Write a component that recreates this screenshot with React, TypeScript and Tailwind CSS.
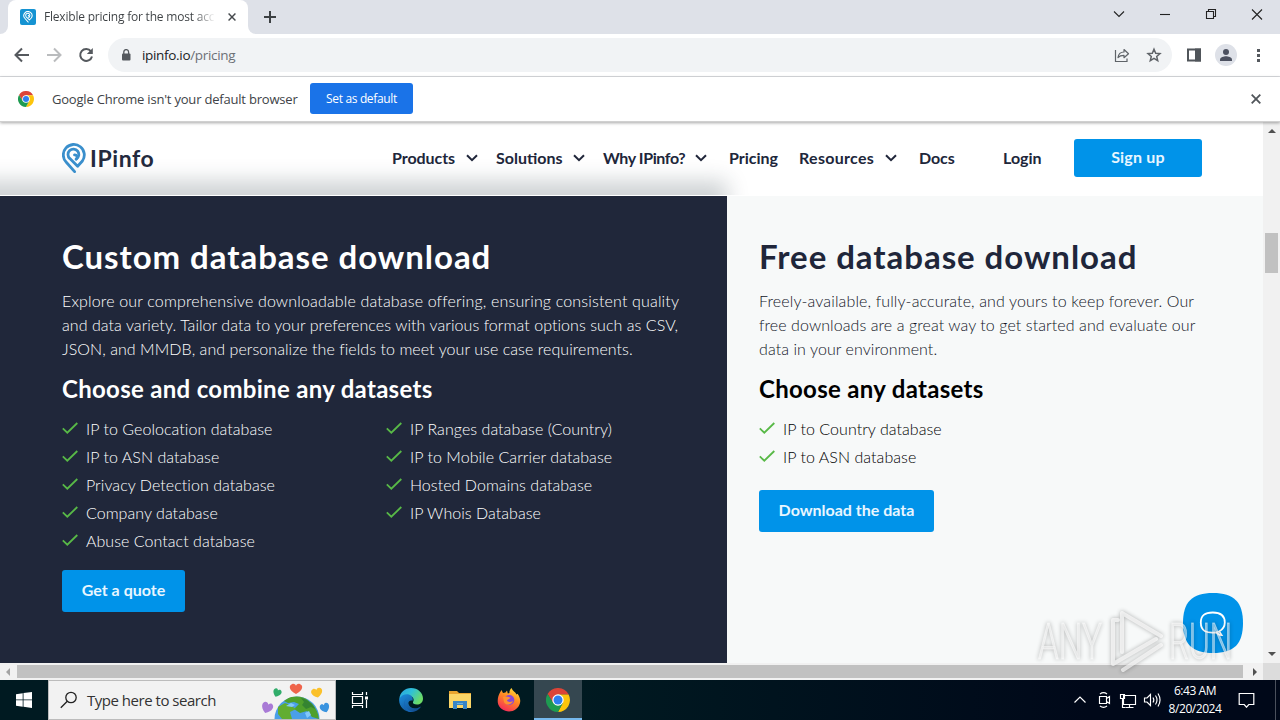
import React from "react";

const navItems = [
  { label: "Products", menu: true, cls: "w-[104px] pr-[18px] tracking-[-0.05px]" },
  { label: "Solutions", menu: true, cls: "w-[107px] pr-[18px] tracking-[0px]" },
  { label: "Why IPinfo?", menu: true, cls: "w-[126px] pr-[22px] tracking-[-0.4px]" },
  { label: "Pricing", menu: false, cls: "w-[70px] tracking-[0px]" },
  { label: "Resources", menu: true, cls: "w-[120px] pr-[22px] tracking-[0.3px]" },
  { label: "Docs", menu: false, cls: "w-[84px] tracking-[-0.1px]" },
];

const customLeft = [
  "IP to Geolocation database",
  "IP to ASN database",
  "Privacy Detection database",
  "Company database",
  "Abuse Contact database",
];
const customRight = [
  "IP Ranges database (Country)",
  "IP to Mobile Carrier database",
  "Hosted Domains database",
  "IP Whois Database",
];
const freeItems = ["IP to Country database", "IP to ASN database"];

function ChromeLogo({ className }: { className: string }) {
  return (
    <svg viewBox="0 0 24 24" className={className}>
      <path d="M12 6.4H22.6L22.4 6A12 12 0 0 0 1.6 6L7.1 15Z" fill="#dc4437" />
      <path d="M16.9 14.8 12 24A12 12 0 0 0 22.6 6.4H12Z" fill="#fdc50c" />
      <path d="M7.1 14.8 1.6 6A12 12 0 0 0 12 24L16.9 14.8Z" fill="#1e9b51" />
      <circle cx="12" cy="12" r="5.7" fill="#fff" />
      <circle cx="12" cy="12" r="4.5" fill="#2d7ff0" />
    </svg>
  );
}

function PinLogo({ className, color, width }: { className: string; color: string; width: number }) {
  return (
    <svg viewBox="0 0 24 31" className={className} fill="none" stroke={color} strokeWidth={width} strokeLinecap="round" strokeLinejoin="round">
      <path d="M12.600 28.600 4.300 19.300A10.500 10.500 0 1 1 20.400 18L15.600 23.200 7.900 15.600A5.400 5.400 0 1 1 14.200 16.100" />
      <path d="M14.200 16.100A2.400 2.400 0 0 0 12.500 11.800" />
    </svg>
  );
}

function Cross({ className }: { className: string }) {
  return (
    <svg viewBox="0 0 10 10" className={className} fill="none" stroke="currentColor" strokeWidth="1.8">
      <path d="m.7.7 8.600 8.600M9.300.7.7 9.300" />
    </svg>
  );
}

function CheckItem({ label }: { label: string }) {
  return (
    <li className="flex h-7 items-center">
      <svg viewBox="0 0 16 12" className="-mt-[3px] mr-2 h-3 w-4" fill="none" stroke="#58b947" strokeWidth="1.8">
        <path d="m.8 6.4 4.5 4.3L15.3 1" />
      </svg>
      <span className="whitespace-nowrap tracking-[0.05px]">{label}</span>
    </li>
  );
}

function TabStrip() {
  return (
    <div className="flex h-[34px] bg-[#dee1e8]">
      <div className="w-2 bg-white">
        <div className="h-full w-2 rounded-br-lg bg-[#dee1e8]" />
      </div>
      <div className="flex w-[240px] items-center rounded-t-lg bg-white pl-3">
        <div className="flex size-4 items-center justify-center rounded-[2px] bg-[#1593d2]">
          <PinLogo className="h-3 w-2.5" color="#fff" width={2.6} />
        </div>
        <div className="ml-2 w-[171px] overflow-hidden whitespace-nowrap bg-linear-to-r from-[#3c4043] from-88% to-transparent bg-clip-text text-[12px] tracking-[-0.2px] text-transparent">
          Flexible pricing for the most acc
        </div>
        <Cross className="ml-[13px] size-2 text-[#45494d]" />
      </div>
      <div className="w-2 bg-white">
        <div className="h-full w-2 rounded-bl-lg bg-[#dee1e8]" />
      </div>
      <svg viewBox="0 0 12 12" className="ml-2 mt-[11px] size-3" stroke="#3c4043" strokeWidth="2">
        <path d="M6 0v12M0 6h12" />
      </svg>
      <div className="ml-auto flex pr-4">
        <svg viewBox="0 0 160 34" className="h-[34px] w-40" fill="none" stroke="#222" strokeWidth="1.1">
          <path d="m10 11.500 5 5 5-5" />
          <path d="M56 14.500h10" />
          <path d="M102.500 11.500h7v7h-7zM104.500 11.500v-2h7v7h-2" />
          <path d="m148 9.500 10 10m0-10-10 10" />
        </svg>
      </div>
    </div>
  );
}

function Toolbar() {
  return (
    <div className="flex h-[43px] items-center border-b border-[#dadce0] bg-white">
      <svg viewBox="0 0 108 42" className="h-[42px] w-[108px] shrink-0" fill="none" strokeWidth="2">
        <path d="M29 21H16m6-6.500L15.500 21l6.500 6.500" stroke="#55595e" />
        <path d="M47 21h13m-6-6.500 6.500 6.500-6.500 6.500" stroke="#babcbe" />
        <path d="M91 17.300A6 6 0 1 0 92 22.500" stroke="#55595e" />
        <path d="M92.800 14v6h-6z" fill="#55595e" />
      </svg>
      <div className="flex h-[34px] w-[1064px] items-center rounded-full bg-[#f1f3f5] pl-[13px]">
        <svg viewBox="0 0 10 12" className="h-3 w-2.5">
          <rect x="1" y="4.500" width="8.500" height="7" rx="1" fill="#55595e" />
          <path d="M2.800 5V3a2.400 2.400 0 0 1 4.800 0v2" fill="none" stroke="#55595e" strokeWidth="1.300" />
        </svg>
        <span className="ml-[11px] text-[13.500px] tracking-[-0.32px] text-[#202124]">
          ipinfo.io<span className="text-[#6c7075]">/pricing</span>
        </span>
        <svg viewBox="0 0 56 20" className="ml-auto mr-[2px] h-5 w-14" fill="none" stroke="#5f6368">
          <path d="M1.500 5v11.500h11.500v-3" strokeWidth="1.200" />
          <path d="M4 12.500c.5-4 3-5.500 6-5.500V4.500l4.500 4.200-4.500 4V10.300c-2.500 0-4.500.5-6 2.200Z" strokeWidth="1.200" strokeLinejoin="round" />
          <path d="m40 4.200 1.700 4 4.300.4-3.300 2.900 1 4.200-3.700-2.300-3.700 2.300 1-4.200-3.300-2.900 4.300-.4Z" strokeWidth="1.500" />
        </svg>
      </div>
      <svg viewBox="0 0 108 42" className="h-[42px] w-[108px] shrink-0">
        <path d="M16 15.500h12v11H16z" fill="#fff" stroke="#50555a" strokeWidth="2" />
        <path d="M23 14.500h6v13h-6z" fill="#50555a" />
        <circle cx="54" cy="21" r="11" fill="#dee1e8" />
        <circle cx="54" cy="18" r="3" fill="#4c5160" />
        <path d="M48 27v-1.500c0-2 4-3.200 6-3.200s6 1.200 6 3.200V27z" fill="#4c5160" />
        <path d="M85 15h3v3h-3zM85 20h3v3h-3zM85 25h3v3h-3z" fill="#55595e" />
      </svg>
    </div>
  );
}

function InfoBar() {
  return (
    <div className="relative z-10 flex h-[45px] items-center border-b border-[#d0d0d0] bg-white pl-[18px] pr-[19px] shadow-[0_1px_3px_rgba(0,0,0,0.35)]">
      <ChromeLogo className="size-4" />
      <span className="ml-[18px] mt-px w-[258px] whitespace-nowrap text-[13px] tracking-[-0.2px] text-[#404347]">
        Google Chrome isn't your default browser
      </span>
      <button className="-mt-px h-[31px] w-[103px] rounded-[3px] bg-[#1a73e8] text-[12px] tracking-[-0.35px] text-white">Set as default</button>
      <Cross className="ml-auto size-[10px] text-[#50555a]" />
    </div>
  );
}

function SiteNav() {
  return (
    <header className="relative h-[74px] overflow-hidden bg-white">
      <div className="absolute -left-10 top-[73px] h-20 w-[767px] shadow-[0_-14px_20px_0px_rgba(33,50,60,0.22)]" />
      <div className="relative flex h-[74px] items-center border-b border-white/90 pb-px pl-[62px] font-['Lato',sans-serif]">
        <PinLogo className="h-[31px] w-6" color="#3a8fcc" width={2.8} />
        <span className="ml-1 w-[66px] whitespace-nowrap text-[23px] font-bold leading-7 tracking-[0.6px] text-[#232a3e]">IPinfo</span>
        <nav className="ml-[236px] flex text-[16px] font-bold text-[#20263a]">
          {navItems.map((item) => (
            <a key={item.label} className={`flex items-center justify-between whitespace-nowrap ${item.cls}`}>
              {item.label}
              {item.menu && (
                <svg viewBox="0 0 12 8" className="h-2 w-3" fill="none" stroke="currentColor" strokeWidth="2">
                  <path d="m1 1.200 5 5 5-5" />
                </svg>
              )}
            </a>
          ))}
          <a className="w-[71px]">Login</a>
        </nav>
        <button className="h-[38px] w-32 rounded-[3px] bg-[#0093e9] pb-0.5 text-[16px] font-bold tracking-[0.2px] text-[#e8f6ff]">Sign up</button>
      </div>
    </header>
  );
}

function Content() {
  return (
    <main className="flex h-[467px] font-['Lato',sans-serif] text-[16px]">
      <section className="w-[727px] bg-[#20273a] pl-[62px] pt-10 text-white">
        <h2 className="h-10 whitespace-nowrap text-[33px] font-bold leading-10 tracking-[0.95px]">Custom database download</h2>
        <p className="mt-[13px] whitespace-nowrap font-light leading-6 tracking-[0.06px]">
          <span className="tracking-[0.16px]">Explore our comprehensive downloadable database offering, ensuring consistent quality</span>
          <br />
          and data variety. Tailor data to your preferences with various format options such as CSV,
          <br />
          JSON, and MMDB, and personalize the fields to meet your use case requirements.
        </p>
        <h3 className="mt-3 text-[24px] font-bold leading-8 tracking-[0.3px]">Choose and combine any datasets</h3>
        <div className="mt-[10px] flex font-light">
          <ul className="w-[324px]">{customLeft.map((l) => <CheckItem key={l} label={l} />)}</ul>
          <ul>{customRight.map((l) => <CheckItem key={l} label={l} />)}</ul>
        </div>
        <button className="mt-[15px] h-[42px] w-[123px] rounded-[3px] bg-[#0093e9] pb-0.5 font-bold text-[#e8f6ff]">Get a quote</button>
      </section>
      <section className="flex-1 bg-[#f7f9f9] pl-8 pt-10 text-[#20263a]">
        <h2 className="h-10 whitespace-nowrap text-[33px] font-bold leading-10 tracking-[0.95px]">Free database download</h2>
        <p className="mt-[13px] whitespace-nowrap font-light leading-6 tracking-[0.08px] text-[#10141f]">
          <span className="tracking-[0.13px]">Freely-available, fully-accurate, and yours to keep forever. Our</span>
          <br />
          free downloads are a great way to get started and evaluate our
          <br />
          data in your environment.
        </p>
        <h3 className="mt-3 text-[24px] font-bold leading-8 tracking-[0.3px] text-black">Choose any datasets</h3>
        <ul className="mt-[10px] font-light text-black">{freeItems.map((l) => <CheckItem key={l} label={l} />)}</ul>
        <button className="mt-[19px] h-[42px] w-[175px] rounded-[3px] bg-[#0093e9] pb-0.5 font-bold text-[#e8f6ff]">Download the data</button>
      </section>
    </main>
  );
}

function VerticalScrollbar() {
  return (
    <div className="flex w-[17px] flex-col items-center bg-[#f1f1f1]">
      <svg viewBox="0 0 8 4" className="mt-[7px] h-1 w-2" fill="#505050"><path d="M0 4 4 0l4 4z" /></svg>
      <div className="mt-[100px] h-10 w-[13px] bg-[#c1c1c1]" />
      <svg viewBox="0 0 8 4" className="mb-[7px] mt-auto h-1 w-2" fill="#505050"><path d="m0 0 4 4 4-4z" /></svg>
    </div>
  );
}

function HorizontalScrollbar() {
  return (
    <div className="flex h-[17px] items-center bg-[#f1f1f1]">
      <svg viewBox="0 0 4 8" className="ml-[6px] h-2 w-1" fill="#a3a3a3"><path d="M4 0 0 4l4 4z" /></svg>
      <div className="ml-[7px] h-[13px] w-[1226px] bg-[#c1c1c1]" />
      <svg viewBox="0 0 4 8" className="ml-[10px] h-2 w-1" fill="#505050"><path d="m0 0 4 4-4 4z" /></svg>
      <div className="ml-auto h-full w-[17px] bg-[#dcdcdc]" />
    </div>
  );
}

function Globe() {
  const heart = "M0 4C-5 1-5-3-2.500-4-1-4.500 0-3 0-2.500 0-3 1-4.500 2.500-4 5-3 5 1 0 4Z";
  return (
    <svg viewBox="0 0 74 38" className="h-[38px] w-[74px]">
      <circle cx="37" cy="38" r="22.500" fill="#4a9fe8" />
      <path d="M27 18c7-4 17-3 23 3 5 4 8 10 9 17l-7-2-5-6-7 2-6-4 5-5-5-2-6 1-4-2z" fill="#4fa02c" />
      <path d="M18 26l7-4 5 2 6 4-6 3 2 7H22l-4-5z" fill="#62ad31" />
      <path d="M41 17c7 2 12 6 14 11l-4-2-5 2-4-4 2-3z" fill="#348431" />
      <path d="m26 25 5-3 4 2-3 2zM45 32l4-2 2 4-4 3z" fill="#83c8fa" />
      <g transform="translate(36 8) scale(1.5 1.250)"><path d={heart} fill="#ef644b" /></g>
      <g transform="translate(17 12) rotate(22)"><path d={heart} fill="#31ad6a" /></g>
      <g transform="translate(57 12) rotate(-12) scale(1.350 1.150)"><path d={heart} fill="#fbc12a" /></g>
      <g transform="translate(7 27) rotate(20) scale(1.350)"><path d={heart} fill="#a97bd6" /></g>
      <g transform="translate(65 27) rotate(-20) scale(1.150)"><path d={heart} fill="#3993df" /></g>
    </svg>
  );
}

function Edge() {
  return (
    <svg viewBox="0 0 24 24" className="size-6">
      <defs>
        <linearGradient id="edgeTop" x1="0" y1="0" x2="1" y2=".5"><stop stopColor="#2aa3e0" /><stop offset=".5" stopColor="#2fc0d8" /><stop offset="1" stopColor="#6cdc67" /></linearGradient>
        <linearGradient id="edgeLow" x1="0" y1="0" x2=".8" y2="1"><stop stopColor="#1c8fe0" /><stop offset="1" stopColor="#114a8b" /></linearGradient>
      </defs>
      <path d="M.3 11C1 4 6 0 12 0c7 0 12 5 12 10.500 0 4-3 6-6 6s-4.500-1.200-4-2.500c1.500-2 .5-6-4-6-4 0-8 1-9.700 3Z" fill="url(#edgeTop)" />
      <path d="M.2 11C2 7 6 5.800 9 6.200c4 .5 5.500 4 4.500 6.500-2-1-4.500.5-4 3 .7 4 6 6.500 12.500 2.800C19.500 22.500 16 24 12 24 5 24-.6 18 .2 11Z" fill="url(#edgeLow)" />
      <path d="M7.500 10.500c-4 5 0 12.500 6.500 13.400C5 25 3 14.500 7.500 10.500Z" fill="#1665b5" />
    </svg>
  );
}

function Firefox() {
  return (
    <svg viewBox="0 0 24 24" className="size-6">
      <defs>
        <linearGradient id="ff" x1=".8" y1="0" x2=".3" y2="1"><stop stopColor="#ffe03a" /><stop offset=".45" stopColor="#ff8a23" /><stop offset="1" stopColor="#f5295a" /></linearGradient>
      </defs>
      <path d="M3 4.500 4.500 2l1.500 3 2.500-.5L10 2.500l.8 3 1.700-.5C12 3 13.500 1 14.500 0c1 3 4 4 5 6.500l1-.8C23 9 23.700 12 23 15c-1.500 5.500-6 8.500-11 8.500S1.500 20 .8 14.500C.4 10.500 1.500 7 3 4.500Z" fill="url(#ff)" />
      <circle cx="12.300" cy="12" r="5" fill="#8648d8" />
      <path d="M6 9c3-1 5 0 7.500.5-.5 2-3.500 1.500-3.500 3 1 2 4 1.500 6 .5-1 4-7 5-9 1Z" fill="#ff9130" />
    </svg>
  );
}

function Taskbar() {
  return (
    <footer className="flex h-10 items-center bg-linear-to-r from-[#001a21] from-45% to-[#000819] to-85% text-white">
      <div className="flex w-12 justify-center">
        <svg viewBox="0 0 16 16" className="size-4" fill="#fff"><path d="m0 2.200 6.700-1v6.300H0zM7.500 1.100 16 0v7.500H7.500zM0 8.300h6.700v6.400l-6.700-1zM7.500 8.300H16V16l-8.500-1.200z" /></svg>
      </div>
      <div className="flex h-10 w-72 items-center border border-[#bcbcbc] bg-[#f2f2f2] pl-[11px] text-[#333]">
        <svg viewBox="0 0 18 18" className="size-[18px]" fill="none" stroke="#222" strokeWidth="1.300"><circle cx="11" cy="6.500" r="5.200" /><path d="m7.300 10.200-6.500 6.500" /></svg>
        <span className="ml-[9px] whitespace-nowrap text-[15px] tracking-[-0.48px]">Type here to search</span>
        <div className="ml-auto mr-px"><Globe /></div>
      </div>
      <div className="flex w-12 justify-center">
        <svg viewBox="0 0 18 16" className="h-4 w-[18px]" fill="none" stroke="#fff" strokeWidth="1.200"><path d="M1.500 4.500h10v7h-10zM1.500 0v2.500h10V0M1.500 16v-2.500h10V16M15.500 0v3M15.500 8v8" /><path d="M14 4.500h3v3h-3z" fill="#fff" stroke="none" /></svg>
      </div>
      <div className="ml-0.5 flex w-[50px] justify-center"><Edge /></div>
      <div className="flex w-12 justify-center">
        <svg viewBox="0 0 22 20" className="h-5 w-[22px]"><path d="M0 1h8l2 2h12v15H0z" fill="#e9a52f" /><path d="M0 4h22v14H0z" fill="#fbd667" /><path d="M4 11h14v8h-4v-4H8v4H4z" fill="#3785c6" /><path d="M8 13h6v1H8z" fill="#67b0df" /></svg>
      </div>
      <div className="flex w-[50px] justify-center"><Firefox /></div>
      <div className="flex h-10 w-12 items-center justify-center border-b-2 border-[#76b9ed] bg-[#354750] pt-0.5"><ChromeLogo className="size-6" /></div>
      <svg viewBox="0 0 94 24" className="ml-auto h-6 w-[94px]" fill="none" stroke="#fff" strokeWidth="1.150">
        <path d="m5.500 14.500 5.500-5.500 5.500 5.500" />
        <path d="M30.500 8.500h7v7h-7zM37.500 10.500l3-2v7l-3-2M31 6c2-1.500 5-1.500 7 0M31 18c2 1.500 5 1.500 7 0" />
        <path d="M54.500 7.500h12v9h-12zM60.500 16.500v3M56.500 19.500h8" />
        <path d="M51.500 6.500h4v4h-4zM53.500 10.500v9h3" />
        <path d="M75.500 10h2.500l3.500-3.500v11L78 14h-2.500zM84 9.500c1 1.500 1 3.500 0 5M86.500 7.500c2 3 2 6 0 9M89 5.500c2.500 4 2.500 9 0 13" />
      </svg>
      <div className="w-[64px] whitespace-nowrap text-center text-[12px] leading-[18px] tracking-[-0.45px]">
        <div>6:43 AM</div>
        <div>8/20/2024</div>
      </div>
      <svg viewBox="0 0 16 16" className="ml-[11px] mr-[20px] h-4 w-[17px]" fill="none" stroke="#fff" strokeWidth="1.200"><path d="M.7 1.500h14.600v11h-5L8 15.200l-2.300-2.700h-5z" /></svg>
      <div className="h-full w-[5px] border-l border-[#4a505c]" />
    </footer>
  );
}

function ChatButton() {
  return (
    <div className="absolute left-[1183px] top-[593px] z-20 size-[60px]">
      <svg viewBox="0 0 60 60" className="size-[60px]">
        <path d="M30 0C51 0 60 9 60 30S51 60 30 60 0 51 0 30 9 0 30 0Z" fill="#0093e9" />
        <path d="M36 38.500c1 .5 1.800 2.500 2.500 3.500-2 0-3.800-1-4.700-2.700-10 1.200-16-.8-16-9.800 0-7 4-10 12-10s12 3.500 12 10c0 4-2 7-5.800 9Z" fill="none" stroke="#fff" strokeWidth="1.800" />
      </svg>
    </div>
  );
}

function Watermark() {
  return (
    <div className="pointer-events-none absolute left-[1034px] top-[606px] z-30 h-[74px] w-[224px] drop-shadow-[0_0_2px_rgba(0,0,0,0.45)]">
      <svg viewBox="0 0 224 74" className="h-[74px] w-[224px]">
        <g fill="#fff" fillOpacity=".5" stroke="#fff" strokeOpacity=".45" strokeWidth="1" fontFamily="Roboto, sans-serif" fontWeight="300" fontSize="50">
          <text x="4" y="53" textLength="64" lengthAdjust="spacingAndGlyphs">ANY</text>
          <text x="135" y="53" textLength="63" lengthAdjust="spacingAndGlyphs">RUN</text>
        </g>
        <g fill="none" stroke="#fff" strokeOpacity=".65" strokeWidth="4" strokeLinejoin="round" strokeLinecap="round">
          <path d="M88 46V7l39 23M84 14h-5v44l43-25M89 64l38-25" />
        </g>
      </svg>
    </div>
  );
}

export default function App() {
  return (
    <div className="relative flex h-[720px] w-[1280px] flex-col overflow-hidden bg-white font-['Open_Sans','Noto_Sans',sans-serif]">
      <TabStrip />
      <Toolbar />
      <InfoBar />
      <div className="flex h-[541px]">
        <div className="w-[1263px]">
          <SiteNav />
          <Content />
        </div>
        <VerticalScrollbar />
      </div>
      <HorizontalScrollbar />
      <Taskbar />
      <ChatButton />
      <Watermark />
    </div>
  );
}
